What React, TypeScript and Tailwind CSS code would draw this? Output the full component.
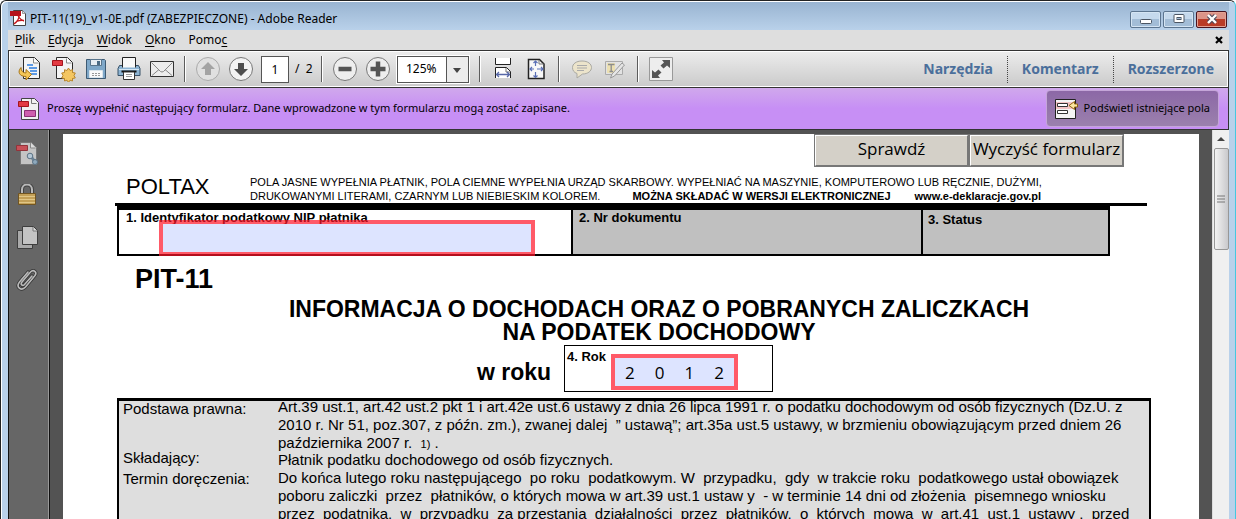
import type { ReactNode } from "react";

const menuItems = [
  { key: "P", before: "", after: "lik" },
  { key: "E", before: "", after: "dycja" },
  { key: "W", before: "", after: "idok" },
  { key: "O", before: "", after: "kno" },
  { key: "c", before: "Pomo", after: "" },
];

const panels = ["Narzędzia", "Komentarz", "Rozszerzone"];

const legalLines = [
  "Art.39 ust.1, art.42 ust.2 pkt 1 i art.42e ust.6 ustawy z dnia 26 lipca 1991 r. o podatku dochodowym od osób fizycznych (Dz.U. z",
  "2010 r. Nr 51, poz.307, z późn. zm.), zwanej dalej  ” ustawą”; art.35a ust.5 ustawy, w brzmieniu obowiązującym przed dniem 26",
];

const deadlineLines = [
  "Do końca lutego roku następującego  po roku  podatkowym. W  przypadku,  gdy  w trakcie roku  podatkowego ustał obowiązek",
  "poboru zaliczki  przez  płatników, o których mowa w art.39 ust.1 ustaw y  - w terminie 14 dni od złożenia  pisemnego wniosku",
  "przez  podatnika,  w  przypadku  za przestania  działalności  przez  płatników,  o  których  mowa  w  art.41  ust.1  ustawy ,  przed",
];

function PageShape() {
  return (
    <>
      <path d="M6.5 1.5h11l5 5v16h-16z" fill="#f4f4f4" stroke="#2b2b2b" strokeLinejoin="round" />
      <path d="M16.500 2.500v4.500h5" fill="#fff" stroke="#8a8a8a" />
    </>
  );
}

function ToolButton({ label, children }: { label: string; children: ReactNode }) {
  return (
    <button type="button" aria-label={label} className="flex h-8 w-[33px] shrink-0 items-center justify-center">
      <svg width="26" height="26" viewBox="0 0 26 26" fill="none">{children}</svg>
    </button>
  );
}

function Divider() {
  return <div className="mr-[5px] ml-1.5 h-[26px] w-0.5 shrink-0 border-r border-l border-r-white border-l-[#5c5c5c]" />;
}

function TitleBar() {
  return (
    <header className="flex h-7 shrink-0 items-center bg-linear-to-b from-[#99b4d1] to-[#b9d1ea] pr-0.5 pl-0.5">
      <svg width="16" height="16" viewBox="0 0 16 16" className="mt-1 mr-1 shrink-0">
        <path d="M3.500.5h9l3 3v12h-12z" fill="#fff" stroke="#444" />
        <path d="M12.500.5v3h3" fill="#ddd" stroke="#777" strokeWidth=".7" />
        <path d="M0 1h11v5H0z" fill="#b5121b" />
        <path d="M8.500 5c-1 0 1 5 5.500 6M9 5c.8 3-2 7-5 9 2-3 5-4 10-3.500" fill="none" stroke="#c3161c" strokeWidth="1.300" />
      </svg>
      <h1 className="mt-1.5 flex-1 truncate text-xs">PIT-11(19)_v1-0E.pdf (ZABEZPIECZONE) - Adobe Reader</h1>
      <div className="mt-1.5 flex gap-0.5">
        <button type="button" aria-label="Minimalizuj" className="flex h-[17px] w-[31px] items-center justify-center rounded-xs border border-[#5c7590] bg-linear-to-b from-[#c5d9ed] from-50% to-[#a3bdd7] to-50% shadow-[inset_0_0_0_1px_#d4e4f3]">
          <svg width="12" height="12" viewBox="0 0 12 12"><rect x=".5" y="6.500" width="11" height="4" rx="1" fill="#fff" stroke="#4b5563" /></svg>
        </button>
        <button type="button" aria-label="Maksymalizuj" className="flex h-[17px] w-[31px] items-center justify-center rounded-xs border border-[#5c7590] bg-linear-to-b from-[#c5d9ed] from-50% to-[#a3bdd7] to-50% shadow-[inset_0_0_0_1px_#d4e4f3]">
          <svg width="12" height="12" viewBox="0 0 12 12"><rect x="1" y="1.500" width="10" height="8" rx="1" fill="#fff" stroke="#4b5563" /><rect x="4" y="4.500" width="4" height="2" fill="#a3bdd7" stroke="#4b5563" /></svg>
        </button>
        <button type="button" aria-label="Zamknij" className="flex h-[17px] w-[31px] items-center justify-center rounded-xs border border-[#4a1420] bg-linear-to-b from-[#dc9488] from-50% to-[#b93c28] to-50% shadow-[inset_0_0_0_1px_#e3a294]">
          <svg width="12" height="12" viewBox="0 0 12 12"><path d="M2.500 2.500l7 7m0-7l-7 7" stroke="#4b4b5b" strokeWidth="4.500" /><path d="M2 2l8 8m0-8l-8 8" stroke="#fff" strokeWidth="2.400" /></svg>
        </button>
      </div>
    </header>
  );
}

function MenuBar() {
  return (
    <nav className="flex h-5 shrink-0 items-center bg-[#dedede] pr-1.5 pl-[7px] text-xs">
      <ul className="flex flex-1 gap-[13px]">
        {menuItems.map(item => (
          <li key={item.key}>
            <a href="#">{item.before}<span className="underline underline-offset-2">{item.key}</span>{item.after}</a>
          </li>
        ))}
      </ul>
      <button type="button" aria-label="Zamknij dokument">
        <svg width="8" height="8" viewBox="0 0 8 8"><path d="M1 1l6 6m0-6L1 7" stroke="#000" strokeWidth="2.200" /></svg>
      </button>
    </nav>
  );
}

function Toolbar() {
  return (
    <div className="flex h-[37px] shrink-0 items-center border border-b-0 border-[#333] bg-linear-to-b from-[#ededed] to-[#cacaca] pl-1 shadow-[inset_0_0_0_1px_#fff]">
      <ToolButton label="Otwórz">
        <PageShape />
        <path d="M10 9h6M12 12h8M13 15h7M14 18h6" stroke="#2d7de0" strokeWidth="1.500" />
        <path d="M4 11.500c-4 4.500-1.500 9 5 9v3.500l5.500-5.500-5.500-5v3.500c-3 0-5-2-5-5.500z" fill="#f4c657" stroke="#a67518" />
      </ToolButton>
      <ToolButton label="Utwórz PDF">
        <PageShape />
        <path d="M2.500 4.500h10v5h-10z" fill="#e33b43" stroke="#a5141c" />
        <path d="M18.500 12l1.500 2.500 2.500-.8v2.800l2.800.5-1.300 2.500 1.300 2.500-2.800.5v2.500l-2.500-.8-1.500 2.300-1.500-2.300-2.500.8v-2.500l-2.800-.5 1.300-2.500-1.300-2.500 2.800-.5v-2.800l2.500.8z" fill="#f4c661" stroke="#b8862f" />
      </ToolButton>
      <ToolButton label="Zapisz">
        <path d="M3.500 3.500h18l1 1v18h-19z" fill="#7fa8c9" stroke="#3d5a73" />
        <path d="M7.500 3.500h11v6h-11z" fill="#e8eef3" stroke="#58748b" />
        <path d="M14 5h3v4h-3z" fill="#4b6b84" />
        <path d="M6.500 14.500h13v7h-13z" fill="#fafafa" stroke="#dbe5ec" />
        <path d="M9 17.500h9M9 19.500h9" stroke="#999" strokeDasharray="2 1" />
      </ToolButton>
      <ToolButton label="Drukuj">
        <path d="M3.500 9.500h19l1.500 3v7H2v-7z" fill="#8db4d3" stroke="#375067" />
        <path d="M6.500 11.500v-10h13v10" fill="#f8f8f8" stroke="#222" />
        <path d="M3 13.500h20" stroke="#d4e5f2" />
        <path d="M5.500 15.500h15" stroke="#111" strokeWidth="2" />
        <path d="M7.500 16h11v7.500h-11z" fill="#fff" stroke="#333" />
        <path d="M10 18.500h6M10 20.500h6" stroke="#999" />
      </ToolButton>
      <ToolButton label="Wyślij e-mail">
        <path d="M1.500 5.500h23v15h-23z" fill="#ededed" stroke="#333" />
        <path d="M2.500 6.500l9 9q1.500 1 3 0l9-9M3 19.500l7-6M23 19.500l-7-6" stroke="#888" />
      </ToolButton>
      <Divider />
      <ToolButton label="Poprzednia strona">
        <circle cx="13" cy="13" r="11.500" fill="#e0e0e0" stroke="#aaa" />
        <path d="M13 6l7 7h-4v6h-6v-6H6z" fill="#a3a3a3" />
      </ToolButton>
      <ToolButton label="Następna strona">
        <circle cx="13" cy="13" r="11.500" fill="#f2f2f2" stroke="#777" />
        <path d="M13 20l7-7h-4V7h-6v6H6z" fill="#4d4d4d" />
      </ToolButton>
      <input aria-label="Strona" defaultValue="1" className="ml-1 h-[27px] w-7 border border-[#555] bg-white text-center text-xs" />
      <span className="mr-0.5 ml-1.5 w-[18px] text-xs whitespace-pre">/  2</span>
      <Divider />
      <ToolButton label="Pomniejsz">
        <circle cx="13" cy="13" r="11.500" fill="#eee" stroke="#777" />
        <path d="M6.500 13h13" stroke="#555" strokeWidth="4.500" />
      </ToolButton>
      <ToolButton label="Powiększ">
        <circle cx="13" cy="13" r="11.500" fill="#eee" stroke="#777" />
        <path d="M5.500 13h15M13 5.500v15" stroke="#555" strokeWidth="4.500" />
      </ToolButton>
      <div className="relative mr-1 ml-[3px] shrink-0">
        <select aria-label="Powiększenie" className="block h-[27px] w-[72px] appearance-none border border-[#555] bg-white pl-2 text-xs outline-1 outline-white">
          <option>125%</option>
        </select>
        <svg width="22" height="25" viewBox="0 0 22 25" className="pointer-events-none absolute top-px right-px">
          <path d="M0 0h22v25H0z" fill="#ececec" />
          <path d="M.5 0v25" stroke="#555" />
          <path d="M7 11h8l-4 5z" fill="#444" />
        </svg>
      </div>
      <Divider />
      <ToolButton label="Dopasuj szerokość">
        <path d="M5.500 2v6.500h15V2" fill="#fff" stroke="#222" />
        <path d="M5.500 22V11.500h11l4 4V22" fill="#fff" stroke="#222" />
        <path d="M16 12v4h4" stroke="#777" />
        <path d="M7 18.500h12M9 16l-2.500 2.500L9 21M17 16l2.500 2.500L17 21" stroke="#5768a8" strokeWidth="1.300" />
      </ToolButton>
      <ToolButton label="Dopasuj stronę">
        <path d="M5.500 3.500h11l4.500 4.500v14.500H5.500z" fill="#f8f8f8" stroke="#222" strokeWidth="1.500" />
        <path d="M16 4v4h4.500" stroke="#777" />
        <path d="M12.500 5v5M12.500 16v6M7 13h4M14 13h6M10.500 7l2-2 2 2M10.500 19.500l2 2 2-2M9 11l-2 2 2 2M18 11l2 2-2 2" stroke="#5b70b5" strokeWidth="1.200" />
      </ToolButton>
      <Divider />
      <ToolButton label="Dodaj notatkę">
        <path d="M13 5c6 0 9.500 3 9.500 6.500S19 18 13.500 18L8 22v-4.500c-3-1-4.500-3-4.500-6C3.500 8 7 5 13 5z" fill="#ece4cb" stroke="#aaa9a2" />
        <path d="M8 9.500h10M8 12h10M8 14.500h7" stroke="#aaa" />
      </ToolButton>
      <ToolButton label="Wyróżnij tekst">
        <path d="M3.500 5.500h17v13h-17z" fill="#e2e2e2" stroke="#aaa" />
        <path d="M5 7h8v10H5z" fill="#ece0b2" />
        <path d="M6 8.500h6.500M9.200 8.500v7M7.500 15.500h3.500" stroke="#8c8c8c" strokeWidth="1.300" />
        <path d="M20 7l2.500 2-10 11-4 2 1.500-4z" fill="#e5e5e5" stroke="#999" />
      </ToolButton>
      <Divider />
      <ToolButton label="Tryb odczytu">
        <path d="M1.500 1.500h23v23h-23z" fill="#ededed" stroke="#999" />
        <path d="M14 4h8v8l-3-2.500-3.500 3-3-3 3.500-3zM4 22v-8l3 2.500 3.500-3 3 3-3.500 3 2 2.500z" fill="#555" />
      </ToolButton>
      <div className="ml-auto flex text-sm font-bold text-[#4b6f9b]">
        {panels.map(panel => (
          <button key={panel} type="button" className="h-[27px] border-l border-dotted border-[#444] px-3.5 first:border-l-0">{panel}</button>
        ))}
      </div>
    </div>
  );
}

function MessageBar() {
  return (
    <div className="flex h-[43px] shrink-0 items-center border border-[#333] bg-linear-to-b from-[#d0a8ec] to-[#c78ff5] to-50% pr-[9px] pl-2 text-[11px]">
      <svg width="24" height="24" viewBox="0 0 24 24" fill="none" className="mr-1.5 shrink-0">
        <path d="M4.500 1.500h13l4 4v17h-17z" fill="#f1f1f1" stroke="#444" />
        <path d="M14.500 2v4.500h5" stroke="#777" />
        <path d="M1.500 4.500h10v5h-10z" fill="#e33b43" stroke="#a5141c" />
        <path d="M7.500 13.500h11v6h-11z" fill="#cf5fae" stroke="#8c2f74" />
      </svg>
      <p className="flex-1">Proszę wypełnić następujący formularz. Dane wprowadzone w tym formularzu mogą zostać zapisane.</p>
      <button type="button" className="flex h-[37px] items-center gap-1.5 rounded-sm border border-[#c4a5d8] bg-linear-to-b from-[#8c68a6] to-[#9b80ad] pr-2 pl-2">
        <svg width="23" height="22" viewBox="0 0 23 22" fill="none">
          <path d="M.5 1.500h20v19H.5z" fill="#f4f4f4" stroke="#222" />
          <path d="M1 4h17v7H1z" fill="#f3c4c4" />
          <path d="M2.500 5.500h10v3h-10zM2.500 12.500h10v3h-10z" fill="#fff" stroke="#333" />
          <path d="M22.500 6h-3V3.500L14 7.500l5.500 4V9h3z" fill="#fbe7a1" stroke="#8f6410" />
        </svg>
        Podświetl istniejące pola
      </button>
    </div>
  );
}

function SidePanel() {
  return (
    <aside className="flex w-[42px] shrink-0 flex-col items-center gap-[18px] border-r border-l border-[#111] bg-[#666] pt-3 pr-1 shadow-[inset_-1px_0_0_#999]">
      <button type="button" aria-label="Udostępnij">
        <svg width="24" height="24" viewBox="0 0 24 24" fill="none" className="block">
          <path d="M5.500.500h11l5 5v17h-16z" fill="#c4c4c4" stroke="#777" />
          <path d="M15.500 1v5h5" fill="#ddd" stroke="#888" />
          <path d="M1.500 3.500h11v5h-11z" fill="#c75058" stroke="#93333a" />
          <path d="M15 13l5 7" stroke="#6c8395" strokeWidth="3" /><circle cx="15" cy="14" r="2.800" fill="#b4c6d4" stroke="#5b7284" /><circle cx="20" cy="20" r="2.500" fill="#8fa9bd" stroke="#5b7284" />
        </svg>
      </button>
      <button type="button" aria-label="Zabezpieczenia">
        <svg width="24" height="24" viewBox="0 0 24 24" fill="none" className="block">
          <path d="M7 9V5.500a5 5 0 0 1 10 0V9" stroke="#444" strokeWidth="4" /><path d="M7 9.500v-4a5 5 0 0 1 10 0v4" stroke="#b9b9b9" strokeWidth="2" />
          <path d="M3.500 9.500h17v11h-17z" fill="#c3a057" stroke="#715522" />
          <path d="M4 12.500h16M4 15.500h16M4 18.500h16" stroke="#e0c687" />
        </svg>
      </button>
      <button type="button" aria-label="Strony">
        <svg width="24" height="24" viewBox="0 0 24 24" fill="none" className="block">
          <path d="M2.500 4.500h15v18h-15z" fill="#aaa" stroke="#3e3e3e" />
          <path d="M7.500.500h11l4 4v14h-15z" fill="#c4c4c4" stroke="#3e3e3e" />
          <path d="M18 1v4h4" fill="#ddd" stroke="#777" />
        </svg>
      </button>
      <button type="button" aria-label="Załączniki">
        <svg width="24" height="26" viewBox="0 0 24 26" fill="none" className="block">
          <path d="M17 8l-7.500 8.500c-2 2-4.500 0-2.500-2.500L15.500 4c3-3 7 0 4.500 3.500L10.500 19c-4 4.500-10 .5-6-5L13 4" stroke="#333" strokeWidth="3.200" strokeLinecap="round" />
          <path d="M17 8l-7.500 8.500c-2 2-4.500 0-2.500-2.500L15.500 4c3-3 7 0 4.500 3.500L10.500 19c-4 4.500-10 .5-6-5L13 4" stroke="#bbb" strokeWidth="1.600" strokeLinecap="round" />
        </svg>
      </button>
    </aside>
  );
}

function FormPage() {
  return (
    <main className="mx-[13px] mt-1 min-w-0 flex-1 overflow-hidden bg-white pr-12 pl-[52px] font-['Liberation_Sans',Arial,sans-serif]">
      <div className="mr-[27px] flex justify-end font-['Open_Sans',sans-serif] text-[17px] leading-none">
        <button type="button" className="h-[33px] w-[155px] border-2 border-t-[#fff] border-r-[#777] border-b-[#777] border-l-[#fff] bg-[#d4d0c8] pb-1 outline-1 -outline-offset-1 outline-[#777]">Sprawdź</button>
        <button type="button" className="h-[33px] w-[155px] border-2 border-t-[#fff] border-r-[#777] border-b-[#777] border-l-[#fff] bg-[#d4d0c8] pb-1 whitespace-nowrap outline-1 -outline-offset-1 outline-[#777]">Wyczyść formularz</button>
      </div>

      <div className="mr-1 flex h-[39px] items-end border-b-3 border-black pl-[11px]">
        <span className="w-[124px] pb-1 text-[22px] leading-6">POLTAX</span>
        <div className="text-[11px] leading-[14px] whitespace-nowrap">
          <p>POLA JASNE WYPEŁNIA PŁATNIK, POLA CIEMNE WYPEŁNIA URZĄD SKARBOWY. WYPEŁNIAĆ NA MASZYNIE, KOMPUTEROWO LUB RĘCZNIE, DUŻYMI,</p>
          <p>
            DRUKOWANYMI LITERAMI, CZARNYM LUB NIEBIESKIM KOLOREM.
            <b className="ml-8">MOŻNA SKŁADAĆ W WERSJI ELEKTRONICZNEJ</b>
            <b className="ml-6">www.e-deklaracje.gov.pl</b>
          </p>
        </div>
      </div>

      <div className="mr-[41px] ml-0.5 flex h-[50px] border-2 border-t-4 border-black text-[13px] leading-4 font-bold">
        <div className="w-[452px] shrink-0 px-[7px]">
          <label htmlFor="nip" className="block h-2.5">1. Identyfikator podatkowy NIP płatnika</label>
          <input id="nip" className="relative ml-[33px] block h-9 w-[376px] border-4 border-[#ff1428]/70 bg-[#dde4ff] bg-clip-padding px-1" />
        </div>
        <div className="flex-1 border-l-2 border-black bg-[#c0c0c0] px-1.5">2. Nr dokumentu</div>
        <div className="w-[187px] border-l-2 border-black bg-[#c0c0c0] px-[5px] pt-0.5">3. Status</div>
      </div>

      <h2 className="mt-[7px] pl-5 text-[27px] leading-8 font-bold">PIT-11</h2>
      <h3 className="mt-[3px] pl-[52px] text-center text-[23px] leading-[23px] font-bold">
        INFORMACJA O DOCHODACH ORAZ O POBRANYCH ZALICZKACH<br />NA PODATEK DOCHODOWY
      </h3>
      <div className="flex pt-px pl-[362px]">
        <span className="w-[87px] pt-[11px] text-[23px] leading-8 font-bold">w roku</span>
        <fieldset aria-label="Rok" className="flex h-[47px] w-[209px] border border-black pl-0.5">
          <label htmlFor="year-0" className="w-11 pt-[3px] text-[13px] leading-4 font-bold whitespace-nowrap">4. Rok</label>
          <div className="mt-2 grid h-9 w-[127px] grid-cols-4 border-4 border-[#ff1428]/70 bg-[#dde4ff] bg-clip-padding font-['Open_Sans',sans-serif] text-[17px]">
            {["2", "0", "1", "2"].map((digit, i) => (
              <input key={i} id={`year-${i}`} aria-label={`Rok, cyfra ${i + 1}`} maxLength={1} defaultValue={digit} className="w-full min-w-0 text-center leading-none" />
            ))}
          </div>
        </fieldset>
      </div>

      <dl className="mt-1.5 ml-0.5 grid grid-cols-[155px_1fr] border-2 border-t-3 border-black bg-[#dedede] pl-1 text-[15px] leading-[18px] whitespace-pre">
        <dt className="-mt-px">Podstawa prawna:</dt>
        <dd className="-mt-[3px]">
          {legalLines.map(line => <p key={line}>{line}</p>)}
          <p>października 2007 r.  <small className="text-[11px] leading-none">1)</small> .</p>
        </dd>
        <dt className="-mt-[3px]">Składający:</dt>
        <dd className="-mt-px">Płatnik podatku dochodowego od osób fizycznych.</dd>
        <dt className="pt-px">Termin doręczenia:</dt>
        <dd>{deadlineLines.map(line => <p key={line}>{line}</p>)}</dd>
      </dl>
    </main>
  );
}

function ScrollBar() {
  return (
    <div className="flex w-[17px] shrink-0 flex-col items-center border-l border-[#ddd] bg-[#f0f0f0] pt-1.5">
      <svg width="8" height="6" viewBox="0 0 8 6"><path d="M4 1l4 4H0z" fill="#444" /></svg>
      <div className="mt-1.5 flex h-[102px] w-[15px] items-center justify-center rounded-xs border border-[#979797] bg-linear-to-r from-[#f3f3f3] to-[#c9c9cc]">
        <svg width="8" height="8" viewBox="0 0 8 8"><path d="M0 1h8M0 4h8M0 7h8" stroke="#777" /></svg>
      </div>
    </div>
  );
}

export default function App() {
  return (
    <div className="flex h-screen flex-col overflow-hidden rounded-t-md border-t border-r border-l border-t-[#222] border-r-[#45c8e0] border-l-[#222] bg-[#b9d1ea] px-[7px] pt-px pr-1.5 font-['Noto_Sans','Open_Sans',sans-serif] text-black shadow-[inset_1px_1px_0_#fff]">
      <TitleBar />
      <MenuBar />
      <Toolbar />
      <MessageBar />
      <div className="flex min-h-0 flex-1 bg-[#535353]">
        <SidePanel />
        <FormPage />
        <ScrollBar />
      </div>
    </div>
  );
}
